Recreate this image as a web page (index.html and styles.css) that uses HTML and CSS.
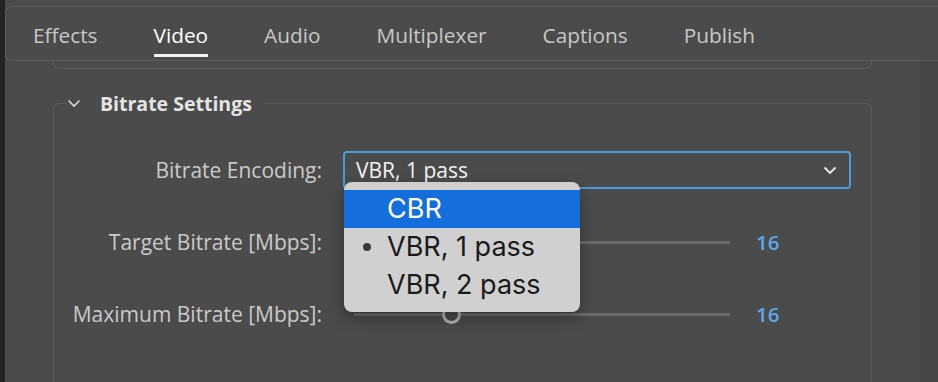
FILE: index.html
```html
<!DOCTYPE html>
<html lang="en">
  <head>
    <meta charset="UTF-8" />
    <title>Export Settings</title>
    <link rel="stylesheet" href="styles.css">
  </head>
  <body>
    <div class="window">
      <div class="tabs">
        <div class="tab">Effects</div>
        <div class="tab active">Video</div>
        <div class="tab">Audio</div>
        <div class="tab">Multiplexer</div>
        <div class="tab">Captions</div>
        <div class="tab">Publish</div>
      </div>
      <div class="body-row">
        <div class="scroll">
          <div class="prev-panel"></div>
          <fieldset class="section">
            <legend class="section-title">
              <svg class="chevron" width="14" height="9" viewBox="0 0 14 9">
                <path d="M1.5 1.5 L7 7 L12.5 1.5" fill="none" stroke="#d8d8d8" stroke-width="1.6" />
              </svg>
              <span>Bitrate Settings</span>
            </legend>
            <div class="rows">
              <div class="label">Bitrate Encoding:</div>
              <div class="control">
                <div class="select">
                  <span>VBR, 1 pass</span>
                  <svg width="14" height="9" viewBox="0 0 14 9">
                    <path d="M1.5 1.5 L7 7 L12.5 1.5" fill="none" stroke="#ececec" stroke-width="1.8" />
                  </svg>
                </div>
                <div class="menu">
                  <div class="menu-item selected">CBR</div>
                  <div class="menu-item checked">VBR, 1 pass</div>
                  <div class="menu-item">VBR, 2 pass</div>
                </div>
              </div>

              <div class="label">Target Bitrate [Mbps]:</div>
              <div class="control slider-row">
                <div class="track"><span class="thumb"></span></div>
                <div class="value">16</div>
              </div>

              <div class="label">Maximum Bitrate [Mbps]:</div>
              <div class="control slider-row">
                <div class="track"><span class="thumb"></span></div>
                <div class="value">16</div>
              </div>
            </div>
          </fieldset>
        </div>
        <div class="side"></div>
      </div>
    </div>
  </body>
</html>
```

FILE: styles.css
```css
* {
  margin: 0;
  padding: 0;
  box-sizing: border-box;
}

body {
  background-color: #232323;
  font-family: "Open Sans", sans-serif;
  width: 938px;
  height: 382px;
  overflow: hidden;
}

.window {
  margin-left: 5px;
  height: 382px;
  background-color: #4b4b4b;
  padding-top: 6px;
  display: flex;
  flex-direction: column;
}

.tabs {
  height: 55px;
  border: 1px solid #5b5b5b;
  border-right: none;
  border-radius: 6px 0 0 6px;
  display: flex;
  gap: 56px;
  padding-left: 27px;
}

.tab {
  font-size: 20.8px;
  color: #c8c8c8;
  line-height: 56px;
  position: relative;
}

.tab.active {
  color: #ffffff;
}

.tab.active::after {
  content: "";
  position: absolute;
  left: 0;
  right: 0;
  bottom: 3px;
  height: 3px;
  background-color: #f2f2f2;
}

.body-row {
  flex: 1;
  display: flex;
}

.scroll {
  flex: 1;
}

.side {
  width: 18px;
  background-color: #474747;
}

.prev-panel {
  margin: 0 48px;
  height: 8px;
  border: 1px solid #5b5b5b;
  border-top: none;
  border-radius: 0 0 6px 6px;
}

.section {
  margin: 21px 48px 0;
  border: 1px solid #5b5b5b;
  border-bottom: none;
  border-radius: 6px 6px 0 0;
  height: 300px;
  padding: 0;
}

.section-title {
  margin-left: 12px;
  padding: 0 12px 0 0;
  display: flex;
  align-items: center;
  gap: 19px;
  font-size: 19.5px;
  font-weight: 700;
  color: #e4e4e4;
}

.chevron {
  margin-left: 1px;
}

.rows {
  display: grid;
  grid-template-columns: 268px 508px;
  grid-auto-rows: 38px;
  row-gap: 34px;
  column-gap: 21px;
  margin-top: 34px;
}

.label {
  font-size: 21px;
  color: #cacaca;
  text-align: right;
  line-height: 38px;
}

.control {
  position: relative;
  display: flex;
  align-items: center;
}

.select {
  width: 508px;
  height: 38px;
  border: 2px solid #4b9be0;
  border-radius: 4px;
  display: flex;
  align-items: center;
  justify-content: space-between;
  padding: 0 12px 0 11px;
  font-size: 21px;
  color: #f4f4f4;
}

.menu {
  position: absolute;
  left: 1px;
  top: 31px;
  width: 236px;
  padding: 8px 0 8px;
  background-color: #d0d0d0;
  border-radius: 8px;
  box-shadow: 0 6px 16px rgba(0, 0, 0, 0.35);
  font-family: "Inter", "Liberation Sans", sans-serif;
  z-index: 2;
}

.menu-item {
  height: 38px;
  line-height: 38px;
  padding-left: 43px;
  font-size: 27px;
  color: #1a1a1a;
  position: relative;
}

.menu-item.selected {
  background-color: #146fdc;
  color: #ffffff;
}

.menu-item.checked::before {
  content: "";
  position: absolute;
  left: 19px;
  top: 15px;
  width: 8px;
  height: 8px;
  border-radius: 50%;
  background-color: #3a3a3a;
}

.slider-row {
  padding-left: 11px;
  gap: 26px;
}

.track {
  width: 376px;
  height: 3px;
  background-color: #6b6b6b;
  position: relative;
}

.thumb {
  position: absolute;
  left: 88px;
  top: -8px;
  width: 19px;
  height: 19px;
  border-radius: 50%;
  border: 3px solid #b4b4b4;
  background-color: #4b4b4b;
}

.value {
  font-size: 20.5px;
  font-weight: 600;
  color: #5aa9e6;
}
```
